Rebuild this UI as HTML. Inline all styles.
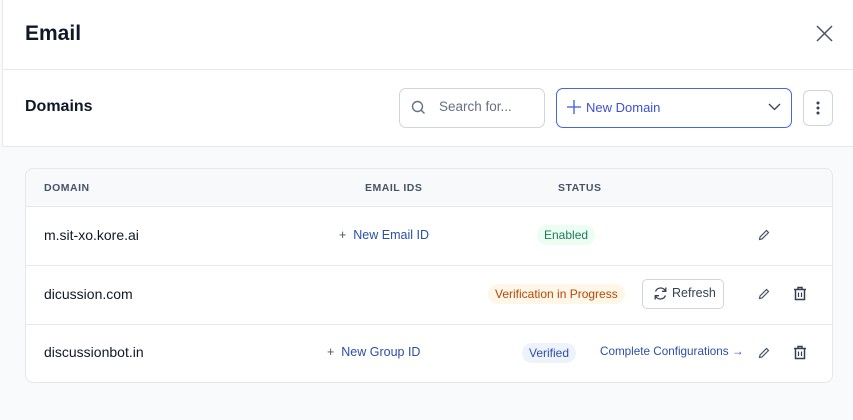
<!DOCTYPE html>
<html><head><meta charset="utf-8"><style>
*{box-sizing:border-box;margin:0;padding:0}
body{width:853px;height:420px;overflow:hidden;background:#f9fafb;font-family:"Liberation Sans",sans-serif;color:#101828;position:relative}
.a{position:absolute}
.top{left:2px;top:0;width:851px;height:146px;background:#fff;border-left:1px solid #e8e9ec}
.hl{height:1px;background:#e6e8ec;left:2px;width:851px}
.card{left:25px;top:168px;width:808px;height:215px;background:#fff;border:1px solid #e4e7ec;border-radius:8px;overflow:hidden}
.th{left:0;top:0;width:100%;height:38px;background:#f8f9fb;border-bottom:1px solid #e4e7ec}
.hd{font-size:10.5px;font-weight:bold;color:#475467;letter-spacing:.5px;top:13px}
.row{left:0;width:100%;height:59px;border-bottom:1px solid #e8e9ec}
.t{font-size:14px;color:#101828}
.lnk{font-size:12.5px;color:#2a4fa8}
.pill{font-size:12px;padding:3px 7px;border-radius:10px}
</style></head><body>
<div class="a top"></div>
<div class="a" style="left:25px;top:22px;font-size:21px;font-weight:bold">Email</div>
<svg class="a" style="left:816px;top:25px" width="17" height="17" viewBox="0 0 17 17"><path d="M1 1L16 16M16 1L1 16" stroke="#4b5563" stroke-width="1.5"/></svg>
<div class="a hl" style="top:69px"></div>
<div class="a" style="left:25px;top:98px;font-size:16px;font-weight:bold">Domains</div>
<div class="a" style="left:399px;top:88px;width:146px;height:40px;border:1px solid #d0d5dd;border-radius:7px"></div>
<svg class="a" style="left:411px;top:100px" width="15" height="15" viewBox="0 0 15 15"><circle cx="6.5" cy="6.5" r="5" fill="none" stroke="#667085" stroke-width="1.4"/><path d="M10.2 10.2L13.5 13.5" stroke="#667085" stroke-width="1.4"/></svg>
<div class="a" style="left:439px;top:99px;font-size:13.5px;color:#667085">Search for...</div>
<div class="a" style="left:556px;top:88px;width:236px;height:40px;border:1.5px solid #4a63e0;border-radius:7px"></div>
<svg class="a" style="left:567px;top:100px" width="14" height="14" viewBox="0 0 14 14"><path d="M7 0V14M0 7H14" stroke="#3b5bdb" stroke-width="1.3"/></svg>
<div class="a" style="left:586px;top:100px;font-size:13px;color:#3b4fd8">New Domain</div>
<svg class="a" style="left:768px;top:103px" width="13" height="8" viewBox="0 0 13 8"><path d="M1 1L6.5 6.5L12 1" fill="none" stroke="#344054" stroke-width="1.3"/></svg>
<div class="a" style="left:803px;top:90px;width:30px;height:36px;border:1px solid #d0d5dd;border-radius:6px"></div>
<svg class="a" style="left:816px;top:101px" width="4" height="14" viewBox="0 0 4 14"><circle cx="2" cy="2" r="1.5" fill="#344054"/><circle cx="2" cy="7" r="1.5" fill="#344054"/><circle cx="2" cy="12" r="1.5" fill="#344054"/></svg>
<div class="a hl" style="top:146px"></div>
<div class="a card">
 <div class="a th"></div>
 <div class="a hd" style="left:18px">DOMAIN</div>
 <div class="a hd" style="left:339px">EMAIL IDS</div>
 <div class="a hd" style="left:532px">STATUS</div>
 <div class="a row" style="top:38px"></div>
 <div class="a row" style="top:97px"></div>
 <div class="a t" style="left:18px;top:58px">m.sit-xo.kore.ai</div>
 <div class="a lnk" style="left:313px;top:59px"><span style="color:#475467">+</span>&nbsp; New Email ID</div>
 <div class="a pill" style="left:511px;top:56px;background:#ecfdf3;color:#1e7a5a">Enabled</div>
 <div class="a t" style="left:18px;top:117px">dicussion.com</div>
 <div class="a pill" style="left:462px;top:115px;background:#fef6e7;color:#b54708">Verification in Progress</div>
 <div class="a" style="left:616px;top:110px;width:82px;height:30px;border:1px solid #d0d5dd;border-radius:5px"></div>
 <svg class="a" style="left:627px;top:117px" width="15" height="15" viewBox="0 0 15 15"><path d="M12.5 5A5.5 5.5 0 0 0 2.5 5.5M2.5 10A5.5 5.5 0 0 0 12.5 9.5" fill="none" stroke="#344054" stroke-width="1.3"/><path d="M12.8 1.5V5.3H9M2.2 13.5V9.7H6" fill="none" stroke="#344054" stroke-width="1.3"/></svg>
 <div class="a" style="left:646px;top:117px;font-size:12.5px;color:#344054">Refresh</div>
 <div class="a t" style="left:18px;top:175px">discussionbot.in</div>
 <div class="a lnk" style="left:301px;top:176px"><span style="color:#475467">+</span>&nbsp; New Group ID</div>
 <div class="a pill" style="left:496px;top:174px;background:#eef2fb;color:#2a4fa8">Verified</div>
 <div class="a" style="left:574px;top:176px;font-size:11.7px;color:#2a4fa8">Complete Configurations →</div>
 <svg class="a" style="left:732px;top:60px" width="12" height="12" viewBox="0 0 12 12"><path d="M1.5 10.5L2 8L8.5 1.5L10.5 3.5L4 10Z" fill="none" stroke="#475467" stroke-width="1.2"/></svg>
 <svg class="a" style="left:732px;top:119px" width="12" height="12" viewBox="0 0 12 12"><path d="M1.5 10.5L2 8L8.5 1.5L10.5 3.5L4 10Z" fill="none" stroke="#475467" stroke-width="1.2"/></svg>
 <svg class="a" style="left:732px;top:178px" width="12" height="12" viewBox="0 0 12 12"><path d="M1.5 10.5L2 8L8.5 1.5L10.5 3.5L4 10Z" fill="none" stroke="#475467" stroke-width="1.2"/></svg>
 <svg class="a" style="left:767px;top:117px" width="14" height="15" viewBox="0 0 14 15"><path d="M1 3.5H13M5 3V1.5H9V3M2.5 4V13.5H11.5V4" fill="none" stroke="#344054" stroke-width="1.5"/><path d="M5.5 6.5V11M8.5 6.5V11" stroke="#344054" stroke-width="1.2"/></svg>
 <svg class="a" style="left:767px;top:176px" width="14" height="15" viewBox="0 0 14 15"><path d="M1 3.5H13M5 3V1.5H9V3M2.5 4V13.5H11.5V4" fill="none" stroke="#344054" stroke-width="1.5"/><path d="M5.5 6.5V11M8.5 6.5V11" stroke="#344054" stroke-width="1.2"/></svg>
</div>
</body></html>
